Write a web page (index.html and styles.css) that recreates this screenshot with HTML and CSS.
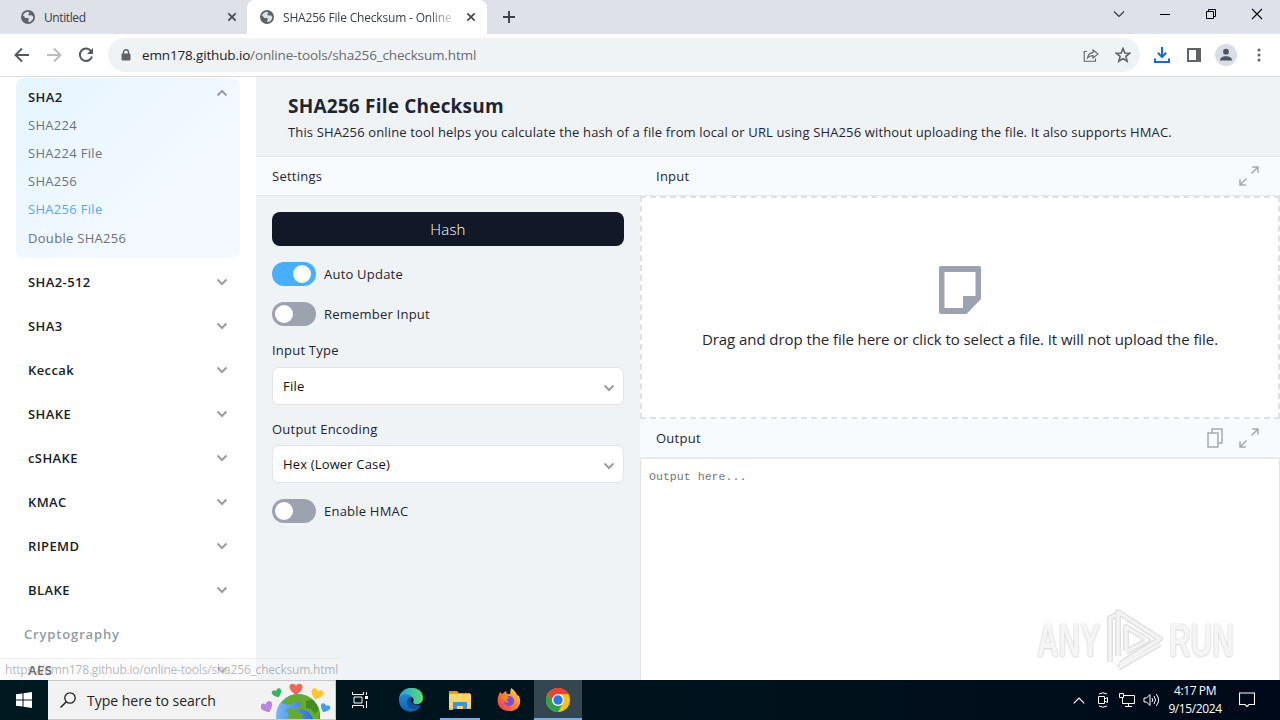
FILE: index.html
```html
<!DOCTYPE html>
<html lang="en">
<head>
  <meta charset="utf-8">
  <title>SHA256 File Checksum - Online Tools</title>
  <link rel="stylesheet" href="styles.css">
</head>
<body>
  <!-- shared icons -->
  <svg class="sprite">
    <symbol id="globe" viewBox="0 0 14 14">
      <circle cx="7" cy="7" r="7" fill="#5f6368"/>
      <path d="M2 5.5C3 3 5 2 7.5 1.8L8.3 3.2 7 4.5 8.5 5.6 10.6 5.2 12.3 6.8C12.4 9.5 10.4 11.7 8 12L6.8 11 8.2 9.3 6.7 8 4.4 7.9 3.2 6.6Z" fill="#dee1e6"/>
    </symbol>
    <symbol id="close" viewBox="0 0 10 10">
      <path d="M1.3 1.3 8.7 8.7M8.7 1.3 1.3 8.7" fill="none" stroke="#45494d" stroke-width="1.7"/>
    </symbol>
    <symbol id="chevron" viewBox="0 0 12 8">
      <path d="M1.5 1.5 6 6 10.5 1.5" fill="none" stroke="#9a9da1" stroke-width="2"/>
    </symbol>
    <symbol id="expand" viewBox="0 0 20 20">
      <path d="M12.5 7.5 18.8 1.2M13.2 1H19V6.8M7.5 12.5 1.2 18.8M1 13.2V19H6.8" fill="none" stroke="#a7aaad" stroke-width="1.5"/>
    </symbol>
  </svg>

  <div class="screen">
    <div class="tabs">
      <div class="tab">
        <svg class="favicon"><use href="#globe"/></svg>
        <span class="tab-title">Untitled</span>
        <svg class="tab-close"><use href="#close"/></svg>
      </div>
      <div class="tab active">
        <svg class="favicon"><use href="#globe"/></svg>
        <span class="tab-title long">SHA256 File Checksum - Online</span>
        <svg class="tab-close"><use href="#close"/></svg>
      </div>
      <svg class="new-tab" viewBox="0 0 12 12"><path d="M6 0V12M0 6H12" stroke="#3c4043" stroke-width="1.9"/></svg>
      <div class="window-buttons">
        <svg viewBox="0 0 12 12"><path d="M1 3.5 6 8.5 11 3.5" fill="none" stroke="#333" stroke-width="1.1"/></svg>
        <svg viewBox="0 0 12 12"><path d="M1 6.5H11" stroke="#000"/></svg>
        <svg viewBox="0 0 12 12"><path d="M1.5 3.5H8.5V10.5H1.5ZM3.5 3.5V1.5H10.5V8.5H8.5" fill="none" stroke="#000"/></svg>
        <svg viewBox="0 0 12 12"><path d="M1 1 11 11M11 1 1 11" stroke="#000" stroke-width="1.1"/></svg>
      </div>
    </div>

    <div class="toolbar">
      <svg class="nav-icon" viewBox="0 0 16 16"><path d="M15 8H2M8 1.5 1.5 8 8 14.5" fill="none" stroke="#55595e" stroke-width="1.9"/></svg>
      <svg class="nav-icon" viewBox="0 0 16 16"><path d="M1 8H14M8 1.5 14.5 8 8 14.5" fill="none" stroke="#babcbe" stroke-width="1.9"/></svg>
      <svg class="nav-icon" viewBox="0 0 16 16"><path d="M13.2 4.2A6.2 6.2 0 1 0 14 9.5" fill="none" stroke="#55595e" stroke-width="2"/><path d="M15 1V7H9Z" fill="#55595e"/></svg>
      <div class="address">
        <svg class="lock" viewBox="0 0 10 12"><path d="M2.5 5V3.2A2.5 2.4 0 0 1 7.5 3.2V5" fill="none" stroke="#5f6368" stroke-width="1.4"/><rect x="0.5" y="4.5" width="9" height="7" rx="1" fill="#5f6368"/></svg>
        <span class="url"><b>emn178.github.io</b>/online-tools/sha256_checksum.html</span>
        <svg class="share" viewBox="0 0 16 16"><path d="M4 4.5H1.2V14.2H12.5V11.5M4.5 11C5 7.5 7 5.8 10 5.6V3L15 7 10 11V8.6C7.5 8.5 6 9.2 4.5 11Z" fill="none" stroke="#5f6368" stroke-width="1.1"/></svg>
        <svg class="star" viewBox="0 0 16 16"><path d="M8 1.5 9.8 6 14.6 6.3 10.9 9.4 12.1 14.2 8 11.6 3.9 14.2 5.1 9.4 1.4 6.3 6.2 6Z" fill="none" stroke="#5f6368" stroke-width="1.6"/></svg>
      </div>
      <svg class="tool download" viewBox="0 0 16 16"><path d="M8 0V9.5M3.8 5.8 8 10 12.2 5.8M1 11.5V15H15V11.5" fill="none" stroke="#1967d2" stroke-width="2"/></svg>
      <svg class="tool panel" viewBox="0 0 14 14"><rect x="1" y="1" width="12" height="12" fill="#fff" stroke="#5f6368" stroke-width="2"/><path d="M9 1H13V13H9Z" fill="#5f6368"/></svg>
      <svg class="tool avatar" viewBox="0 0 22 22"><circle cx="11" cy="11" r="11" fill="#dadce6"/><circle cx="11" cy="7.7" r="2.9" fill="#4e5566"/><path d="M5 16.5C5 10.9 17 10.9 17 16.5Z" fill="#4e5566"/></svg>
      <svg class="tool dots" viewBox="0 0 4 14"><circle cx="2" cy="2" r="1.5"/><circle cx="2" cy="7" r="1.5"/><circle cx="2" cy="12" r="1.5"/></svg>
    </div>

    <div class="page">
      <nav class="sidebar">
        <div class="group open">
          <div class="group-title">SHA2 <svg class="chevron up"><use href="#chevron"/></svg></div>
          <a class="link">SHA224</a>
          <a class="link">SHA224 File</a>
          <a class="link">SHA256</a>
          <a class="link current">SHA256 File</a>
          <a class="link last">Double SHA256</a>
        </div>
        <div class="group">SHA2-512 <svg class="chevron"><use href="#chevron"/></svg></div>
        <div class="group">SHA3 <svg class="chevron"><use href="#chevron"/></svg></div>
        <div class="group">Keccak <svg class="chevron"><use href="#chevron"/></svg></div>
        <div class="group">SHAKE <svg class="chevron"><use href="#chevron"/></svg></div>
        <div class="group">cSHAKE <svg class="chevron"><use href="#chevron"/></svg></div>
        <div class="group">KMAC <svg class="chevron"><use href="#chevron"/></svg></div>
        <div class="group">RIPEMD <svg class="chevron"><use href="#chevron"/></svg></div>
        <div class="group">BLAKE <svg class="chevron"><use href="#chevron"/></svg></div>
        <div class="category">Cryptography</div>
        <div class="group">AES <svg class="chevron"><use href="#chevron"/></svg></div>
      </nav>

      <main class="main">
        <header class="intro">
          <h1>SHA256 File Checksum</h1>
          <p>This SHA256 online tool helps you calculate the hash of a file from local or URL using SHA256 without uploading the file. It also supports HMAC.</p>
        </header>
        <div class="columns">
          <section class="settings">
            <div class="bar">Settings</div>
            <div class="form">
              <button class="hash">Hash</button>
              <div class="switch-row"><span class="switch on"></span><span>Auto Update</span></div>
              <div class="switch-row"><span class="switch"></span><span>Remember Input</span></div>
              <label class="type">Input Type</label>
              <div class="select"><span>File</span><svg class="chevron"><use href="#chevron"/></svg></div>
              <label class="encoding">Output Encoding</label>
              <div class="select"><span class="hex">Hex (Lower Case)</span><svg class="chevron"><use href="#chevron"/></svg></div>
              <div class="switch-row hmac"><span class="switch"></span><span>Enable HMAC</span></div>
            </div>
          </section>
          <section class="io">
            <div class="bar">Input <span class="actions"><svg class="expand"><use href="#expand"/></svg></span></div>
            <div class="drop">
              <svg class="file-icon" viewBox="0 0 42 48"><path fill="#9ca3af" fill-rule="evenodd" d="M2 0H40Q42 0 42 2V33L27.500 48H2Q0 48 0 46V2Q0 0 2 0ZM5.500 6V42H24V30H36.500V6Z"/></svg>
              <span>Drag and drop the file here or click to select a file. It will not upload the file.</span>
            </div>
            <div class="bar output-bar">Output
              <span class="actions">
                <svg class="copy" viewBox="0 0 16 20"><path d="M1 5H11V19H1ZM5 5V1H15V15H11" fill="none" stroke="#a7aaad" stroke-width="1.500" stroke-linejoin="round"/></svg>
                <svg class="expand"><use href="#expand"/></svg>
              </span>
            </div>
            <div class="output">Output here...</div>
          </section>
        </div>
      </main>

      <div class="status">https://emn178.github.io/online-tools/sha256_checksum.html</div>
      <div class="watermark">
        <span class="mark-text">ANY</span>
        <svg class="mark-logo" viewBox="0 0 58 64">
          <path d="M4 54V10L10 7M12 48V4L54 31 14 56M20 43V19L42 32 20 44M12 60 54 36" fill="none" stroke="#e1e1e1" stroke-width="6" stroke-linejoin="round"/>
          <path d="M4 54V10L10 7M12 48V4L54 31 14 56M20 43V19L42 32 20 44M12 60 54 36" fill="none" stroke="#f4f4f4" stroke-width="3" stroke-linejoin="round"/>
        </svg>
        <span class="mark-text">RUN</span>
      </div>
    </div>

    <footer class="taskbar">
      <div class="start"><svg viewBox="0 0 16 16"><path d="M0 2.300 6.500 1.400V7.500H0ZM7.500 1.200 16 0V7.500H7.500ZM0 8.500H6.500V14.600L0 13.700ZM7.500 8.500H16V16L7.500 14.800Z" fill="#fff"/></svg></div>
      <div class="search">
        <svg class="magnifier" viewBox="0 0 16 16"><circle cx="10" cy="6" r="5.200" fill="none" stroke="#222" stroke-width="1.300"/><path d="M6.300 9.700 0.500 15.500" stroke="#222" stroke-width="1.500"/></svg>
        <span>Type here to search</span>
        <svg class="earth" viewBox="0 0 70 38">
          <defs>
            <clipPath id="world"><circle cx="37" cy="35" r="22"/></clipPath>
            <linearGradient id="sea"><stop offset="0" stop-color="#77b9f5"/><stop offset="1" stop-color="#235fce"/></linearGradient>
            <path id="heart" d="M0 6C-3 4-6.500 1-6.500-2-6.500-5.500-2-6.500 0-3 2-6.500 6.500-5.500 6.500-2 6.500 1 3 4 0 6Z"/>
          </defs>
          <circle cx="37" cy="35" r="22" fill="url(#sea)"/>
          <g clip-path="url(#world)" fill="#65ab2e">
            <path d="M20 22 30 13H43L52 17 60 29 58 38H52L48 31 41 28 36 30 33 26H38L40 22 34 21 29 24 24 23Z"/>
            <path d="M24 29 30 27 36 31 42 33 41 38H27L28 33Z"/>
            <path d="M45 20 53 18 58 28 54 33 50 28 45 27Z" fill="#448b21"/>
          </g>
          <use href="#heart" transform="translate(35 8)" fill="#ee6655"/>
          <use href="#heart" transform="translate(16 12) rotate(-22) scale(.75)" fill="#35b369"/>
          <use href="#heart" transform="translate(56 13) rotate(18) scale(.95)" fill="#ffc331"/>
          <use href="#heart" transform="translate(6 26) rotate(-25) scale(.95)" fill="#b987df"/>
          <use href="#heart" transform="translate(64 27) rotate(25) scale(.75)" fill="#439eea"/>
        </svg>
      </div>
      <div class="task first"><svg class="task-view" viewBox="0 0 16 16"><path d="M.5 0V2.500H11.500V0M2 5H10V11H2ZM.5 16V13.500H11.500V16M14.500 0V3M14.500 9V16" fill="none" stroke="#fff"/><path d="M13 4H16V7H13Z" fill="#fff"/></svg></div>
      <div class="task">
        <svg class="app" viewBox="0 0 24 24">
          <defs>
            <linearGradient id="edgeTop"><stop offset="0" stop-color="#229fd9"/><stop offset="1" stop-color="#60dc72"/></linearGradient>
            <linearGradient id="edgeLow" x2="0" y2="1"><stop offset="0" stop-color="#2485d4"/><stop offset="1" stop-color="#1161b5"/></linearGradient>
          </defs>
          <path d="M0 12C0-4 24-4 24 10C24 17 15 18 14 14C17 9 9 5 0 12Z" fill="url(#edgeTop)"/>
          <path d="M0 12C0 6 9 4 13 9C8 13 13 19 22 18C15 28 0 24 0 12Z" fill="url(#edgeLow)"/>
          <path d="M8 14C8 11 10 9 13 9C10 13 14 18 22 17.500C17 24 8 21 8 14Z" fill="#144f96"/>
        </svg>
      </div>
      <div class="task explorer">
        <svg class="app" viewBox="0 0 24 24"><path d="M1 3H9L11 5H22V9H1Z" fill="#e69b25"/><path d="M1 6H23V21H1Z" fill="#ffd467"/><path d="M5 21V14H19V21H15V18H9V21Z" fill="#3b95d6"/><path d="M1 20H5V22H1ZM19 20H23V21H19Z" fill="#f4bb44"/></svg>
      </div>
      <div class="task">
        <svg class="app" viewBox="0 0 24 24">
          <defs><linearGradient id="fox" x1="1" x2="0" y2="1"><stop offset="0" stop-color="#fff04a"/><stop offset=".45" stop-color="#ff8a24"/><stop offset="1" stop-color="#f12b62"/></linearGradient></defs>
          <path d="M3 4 5 6 9 3 10 6 13 6 14 0C17 2 19 4 20 7L22 8C26 17 19 24 12 23C4 23-1 17 1 9Z" fill="url(#fox)"/>
          <circle cx="12" cy="13" r="5" fill="#764de0"/><path d="M5 8C8 7 11 8 12 10C9 11 9 13 12 14C9 16 6 13 5 8Z" fill="#ff8128"/>
        </svg>
      </div>
      <div class="task focused">
        <svg class="app" viewBox="0 0 24 24"><circle cx="12" cy="12" r="12" fill="#fbc116"/><path d="M1.600 6A12 12 0 0 1 22.400 6H12L7 15Z" fill="#e64235"/><path d="M1.600 6A12 12 0 0 0 12 24L17 15H7Z" fill="#2da14c"/><circle cx="12" cy="12" r="6" fill="#fff"/><circle cx="12" cy="12" r="4.700" fill="#2878e8"/></svg>
      </div>
      <div class="tray">
        <svg class="tray-up" viewBox="0 0 12 7"><path d="M.7 6.300 6 1 11.300 6.300" fill="none" stroke="#fff" stroke-width="1.200"/></svg>
        <svg class="tray-cam" viewBox="0 0 12 16"><path d="M1.500 4.500H7.500V11.500H1.500ZM7.500 7 10.500 5.500V10.500L7.500 9M2 2Q6-.5 10 2M2 14Q6 16.500 10 14" fill="none" stroke="#fff"/></svg>
        <svg class="tray-net" viewBox="0 0 16 14"><path d="M5 2.500H15.500V10.500H3.500V5M9.500 10.500V13.500M6 13.500H13M.5.500H4.500V4.500H.5Z" fill="none" stroke="#fff"/></svg>
        <svg class="tray-sound" viewBox="0 0 17 14"><path d="M1 5H3.500L7 1.500V12.500L3.500 9H1ZM9 5Q10.500 7 9 9M11 3Q14 7 11 11M13.200 1Q18 7 13.200 13" fill="none" stroke="#fff"/></svg>
        <div class="clock"><span>4:17 PM</span><span>9/15/2024</span></div>
        <svg class="notice" viewBox="0 0 16 16"><path d="M.5 1H15.500V12.500H10L8 14.500 6 12.500H.5Z" fill="none" stroke="#fff" stroke-width="1.100"/></svg>
      </div>
    </footer>
  </div>
</body>
</html>
```
FILE: styles.css
```css
* {
  box-sizing: border-box;
}

body {
  margin: 0;
  font-family: "Open Sans", "Noto Sans", sans-serif;
  font-size: 13px;
  letter-spacing: 0.14px;
  color: #1f2530;
}

svg {
  display: block;
  flex: none;
}

.sprite {
  display: none;
}

.screen {
  width: 1280px;
  height: 720px;
  overflow: hidden;
  display: flex;
  flex-direction: column;
}

/* browser */
.tabs {
  height: 34px;
  flex: none;
  display: flex;
  align-items: center;
  background: #dee1e8;
}

.tab {
  width: 247px;
  height: 34px;
  padding: 0 10px 0 21px;
  display: flex;
  align-items: center;
}

.tab.active {
  width: 240px;
  padding: 0 11px 0 13px;
  background: #fff;
  border-radius: 8px 8px 0 0;
}

.favicon {
  width: 14px;
  height: 14px;
}

.tab-title {
  flex: 1;
  margin-left: 9px;
  font-size: 12px;
  letter-spacing: -0.4px;
  white-space: nowrap;
  color: #3c4043;
}

.tab-title.long {
  flex: none;
  width: 170px;
  letter-spacing: -0.18px;
  margin-right: 13px;
  -webkit-mask-image: linear-gradient(to right, #000 145px, transparent 175px);
}

.tab-close {
  width: 10px;
  height: 10px;
}

.new-tab {
  width: 12px;
  height: 12px;
  margin-left: 16px;
}

.window-buttons {
  display: flex;
  gap: 34px;
  margin-left: auto;
  padding: 0 17px 6px 0;
}

.window-buttons svg {
  width: 12px;
  height: 12px;
}

.toolbar {
  height: 43px;
  flex: none;
  display: flex;
  align-items: center;
  padding-left: 14px;
  border-bottom: 1px solid #d9dbdd;
  background: #fff;
}

.nav-icon {
  width: 16px;
  height: 16px;
  margin-right: 16px;
}

.address {
  width: 1032px;
  height: 34px;
  margin-left: -2px;
  padding: 0 9px 0 13px;
  border-radius: 17px;
  background: #f0f3f5;
  display: flex;
  align-items: center;
}

.lock {
  width: 10px;
  height: 12px;
}

.url {
  flex: 1;
  margin-left: 11px;
  font-size: 13.5px;
  letter-spacing: -0.15px;
  color: #676b70;
}

.url b {
  font-weight: 400;
  color: #202124;
}

.share,
.star {
  width: 16px;
  height: 16px;
}

.star {
  margin-left: 16px;
}

.download {
  width: 16px;
  height: 16px;
  margin-left: 14px;
}

.panel {
  width: 14px;
  height: 14px;
  margin-left: 17px;
}

.avatar {
  width: 22px;
  height: 22px;
  margin-left: 14px;
}

.dots {
  width: 4px;
  height: 14px;
  margin-left: 20px;
  fill: #5f6368;
}

/* page */
.page {
  position: relative;
  height: 603px;
  flex: none;
  display: flex;
  overflow: hidden;
}

.sidebar {
  width: 256px;
  padding: 1px 16px 0;
  background: #fff;
}

.group {
  height: 28px;
  margin-bottom: 16px;
  padding: 0 12px;
  display: flex;
  align-items: center;
  justify-content: space-between;
  font-weight: 600;
  letter-spacing: 0.4px;
  color: #171d28;
}

.group.open {
  height: 180px;
  margin-bottom: 10px;
  padding-top: 5px;
  display: block;
  border-radius: 8px;
  background: linear-gradient(135deg, #e6f5ff, #f3f9ff 65%);
}

.group-title {
  height: 28px;
  display: flex;
  align-items: center;
  justify-content: space-between;
}

.chevron {
  width: 12px;
  height: 8px;
}

.chevron.up {
  transform: rotate(180deg);
  margin-bottom: 8px;
}

.link {
  display: block;
  line-height: 28px;
  font-weight: 400;
  letter-spacing: 0.3px;
  color: #6b7280;
}

.link.current {
  color: #58a9e8;
}

.link.last {
  padding-top: 1px;
}

.category {
  height: 28px;
  margin-bottom: 8px;
  padding-left: 8px;
  line-height: 28px;
  font-weight: 600;
  letter-spacing: 0.85px;
  color: #9299a3;
}

.main {
  width: 1024px;
  background: #eff3f6;
  display: flex;
  flex-direction: column;
}

.intro {
  height: 79px;
  padding: 16px 32px 0;
}

.intro h1 {
  margin: 0;
  font-size: 19px;
  line-height: 26px;
  font-weight: 700;
  letter-spacing: 0.2px;
}

.intro p {
  margin: 3px 0 0;
  line-height: 20px;
  white-space: nowrap;
}

.columns {
  flex: 1;
  display: flex;
}

.settings {
  width: 384px;
}

.bar {
  height: 40px;
  padding: 0 21px 0 16px;
  display: flex;
  align-items: center;
  justify-content: space-between;
  letter-spacing: 0.25px;
  background: #f7fbfe;
  border-top: 1px solid #e6eaed;
  border-bottom: 1px solid #e6eaed;
}

.form {
  padding: 16px;
  letter-spacing: 0.22px;
}

.hash {
  display: block;
  width: 352px;
  height: 34px;
  margin: 0 0 16px;
  padding: 0;
  border: 0;
  border-radius: 8px;
  background: #111827;
  color: #fff;
  font: 300 15px "Open Sans", sans-serif;
  letter-spacing: 0.2px;
}

.switch-row {
  height: 24px;
  margin-bottom: 16px;
  display: flex;
  align-items: center;
  gap: 8px;
}

.switch {
  width: 44px;
  height: 24px;
  padding: 3px;
  border-radius: 12px;
  background: #9ca3af;
  display: flex;
}

.switch::before {
  content: "";
  width: 18px;
  height: 18px;
  border-radius: 50%;
  background: #fff;
}

.switch.on {
  padding-right: 5px;
  background: #47afff;
  justify-content: flex-end;
}

label {
  display: block;
  height: 18px;
  margin-bottom: 7px;
  line-height: 18px;
}

.type {
  line-height: 16px;
}

.encoding {
  margin-top: 15px;
}

.select {
  width: 352px;
  height: 38px;
  padding: 0 8px 0 10px;
  border: 1px solid #e1e5e9;
  border-radius: 7px;
  background: #fff;
  color: #111;
  display: flex;
  align-items: center;
  justify-content: space-between;
}

.select .chevron {
  margin-top: 3px;
}

.hex {
  letter-spacing: 0.16px;
}

.hmac {
  margin-top: 16px;
}

.io {
  width: 640px;
  display: flex;
  flex-direction: column;
}

.actions {
  display: flex;
  gap: 16px;
}

.expand {
  width: 20px;
  height: 20px;
}

.copy {
  width: 16px;
  height: 20px;
}

.drop {
  height: 223px;
  padding-bottom: 1px;
  display: flex;
  flex-direction: column;
  align-items: center;
  justify-content: center;
  gap: 15px;
  border: 2px dashed #dfe2e4;
  background: #fff;
  font-size: 15px;
  letter-spacing: -0.07px;
}

.file-icon {
  width: 42px;
  height: 48px;
}

.output-bar {
  border-top: 0;
  border-bottom-width: 2px;
}

.output {
  flex: 1;
  padding: 9px 8px;
  border-left: 1px solid #e0e3e5;
  border-right: 1px solid #e0e3e5;
  background: #fff;
  color: #757575;
  font: 11.6px/17px "Liberation Mono", monospace;
  letter-spacing: 0;
}

/* things floating over the page */
.status {
  position: absolute;
  left: 0;
  bottom: 0;
  width: 342px;
  height: 22px;
  padding-left: 5px;
  border-top: 1px solid rgba(210, 213, 216, 0.3);
  background: rgba(246, 247, 248, 0.35);
  color: rgba(100, 105, 110, 0.48);
  font-size: 12px;
  line-height: 22px;
  letter-spacing: -0.2px;
  white-space: nowrap;
}

.watermark {
  position: absolute;
  right: 47px;
  bottom: 7px;
  display: flex;
  align-items: center;
  justify-content: space-between;
  width: 196px;
  height: 66px;
}

.mark-text {
  width: 64px;
  color: #f5f5f5;
  font: 700 46px "Liberation Sans", sans-serif;
  letter-spacing: 0;
  text-shadow: 0 0 2px #ccc, 0 1px 3px #ddd;
  transform: scaleX(0.65);
  transform-origin: left;
}

.mark-logo {
  width: 58px;
  height: 64px;
}

/* taskbar */
.taskbar {
  height: 40px;
  flex: none;
  display: flex;
  background: linear-gradient(90deg, #001820, #00111c 65%, #000919);
}

.start {
  width: 48px;
  display: grid;
  place-items: center;
}

.start svg,
.task-view {
  width: 16px;
  height: 16px;
}

.search {
  width: 288px;
  padding-left: 12px;
  display: flex;
  align-items: center;
  background: #f2f2f2;
  border: 1px solid #c7c9ca;
  border-left: 0;
  color: #222;
  font-size: 14px;
  letter-spacing: 0;
}

.magnifier {
  width: 16px;
  height: 16px;
  margin-right: 11px;
}

.earth {
  width: 70px;
  height: 38px;
  margin-left: auto;
  margin-right: 4px;
}

.task {
  width: 48px;
  margin-right: 1px;
  display: grid;
  place-items: center;
}

.task.first {
  margin-right: 3px;
}

.app {
  width: 24px;
  height: 24px;
}

/* open windows get an underline */
.explorer {
  background: linear-gradient(#76aee9, #76aee9) center bottom / 40px 2px no-repeat;
}

.focused {
  background: #344650;
  box-shadow: inset 0 -2px #76aee9;
}

.tray {
  margin-left: auto;
  padding-right: 25px;
  display: flex;
  align-items: center;
}

.tray-up {
  width: 12px;
  height: 7px;
  margin-right: 12px;
}

.tray-cam {
  width: 12px;
  height: 16px;
  margin-right: 10px;
}

.tray-net {
  width: 16px;
  height: 14px;
  margin-right: 8px;
}

.tray-sound {
  width: 17px;
  height: 14px;
  margin-right: 8px;
}

.clock {
  width: 54px;
  margin-right: 17px;
  display: flex;
  flex-direction: column;
  align-items: center;
  color: #fff;
  font-size: 12px;
  line-height: 18px;
  letter-spacing: -0.4px;
}

.notice {
  width: 16px;
  height: 16px;
}
```
